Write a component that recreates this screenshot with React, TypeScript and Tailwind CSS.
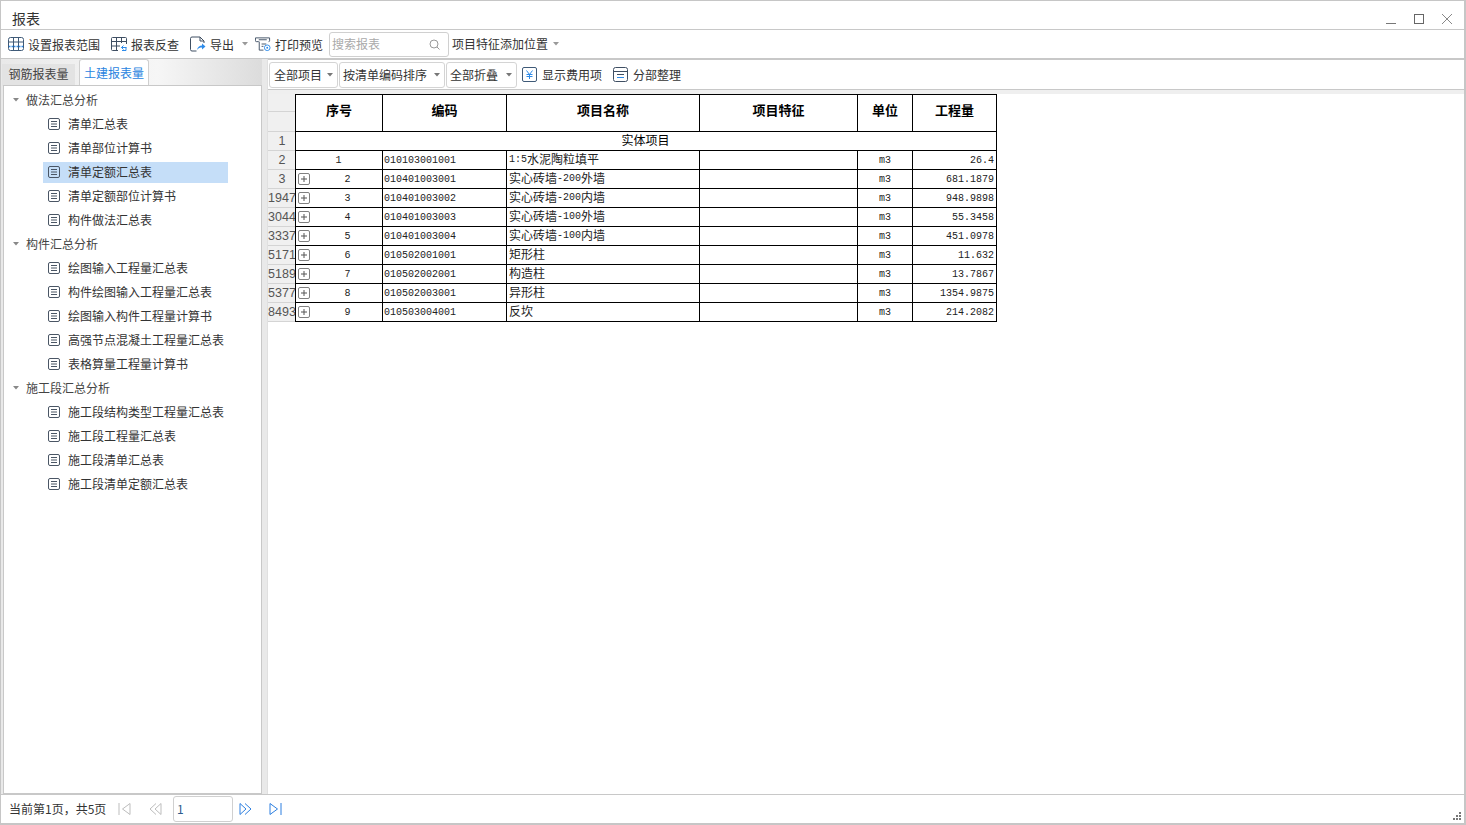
import React from "react";

const cjk = '"Noto Sans CJK SC", "Noto Sans", sans-serif';

function Caret({ c = "#777" }: { c?: string }) {
  return (
    <svg width="6" height="4" viewBox="0 0 6 4" className="shrink-0">
      <path d="M0 0h6L3 3.5z" fill={c} />
    </svg>
  );
}

function TableIcon() {
  return (
    <svg width="16" height="16" viewBox="0 0 16 16" fill="none" className="shrink-0">
      <rect x="0.5" y="1.5" width="15" height="13" rx="2" stroke="#3f5a78" />
      <path d="M5.5 2v12M10.500 2v12M1 6h14" stroke="#3f5a78" />
      <path d="M1 10.500h14" stroke="#2d8bea" strokeWidth="1.5" strokeDasharray="1.5 1" />
    </svg>
  );
}
function ReverseIcon() {
  return (
    <svg width="16" height="16" viewBox="0 0 16 16" fill="none" className="shrink-0">
      <path d="M7 14.500H1.500a1 1 0 0 1-1-1v-11a1 1 0 0 1 1-1h13a1 1 0 0 1 1 1V8" stroke="#3f4f63" />
      <path d="M5.500 2v12M10.500 2v5M1 5.500h14M1 10h8" stroke="#3f4f63" />
      <path d="M15.500 11.500H10.500M12.500 9.500l-2 2 2 2M15 11.500v3h-4" stroke="#2d8bea" />
    </svg>
  );
}
function ExportIcon() {
  return (
    <svg width="16" height="16" viewBox="0 0 16 16" fill="none" className="shrink-0">
      <path d="M6.500 15H2a1.500 1.500 0 0 1-1.500-1.500v-11A1.500 1.500 0 0 1 2 1h8l4 4v2" stroke="#3f4f63" />
      <path d="M10 1v4h4" stroke="#3f4f63" />
      <path d="M7 14c.5-3 2.500-4.500 5-4.500V7.500l3.500 3-3.500 3v-2c-2 0-3.500.5-5 2.500z" fill="#2d8bea" />
    </svg>
  );
}
function PrintIcon() {
  return (
    <svg width="16" height="16" viewBox="0 0 17 16" fill="none" className="shrink-0">
      <path d="M4 5.500H1.500a1 1 0 0 1-1-1v-3h15v3a1 1 0 0 1-1 1" stroke="#3f4f63" />
      <path d="M4 3.500h8.500M4.500 5.500v9h4.500M7 8h5M7 10.500h2" stroke="#3f4f63" />
      <circle cx="13" cy="12" r="3" stroke="#2d8bea" />
      <circle cx="13" cy="12" r="1" fill="#2d8bea" />
    </svg>
  );
}
function DocIcon() {
  return (
    <svg width="12" height="12" viewBox="0 0 12 12" fill="none" className="shrink-0">
      <rect x="0.5" y="0.5" width="11" height="11" rx="1.500" stroke="#4a5665" />
      <path d="M3 3.500h6M3 6h6M3 8.500h6" stroke="#4a5665" />
    </svg>
  );
}
function YenIcon() {
  return (
    <svg width="15" height="15" viewBox="0 0 15 15" fill="none" className="shrink-0">
      <rect x="0.5" y="0.5" width="14" height="14" rx="1.500" stroke="#3f5a78" />
      <path d="M4.500 3.500l3 4 3-4M7.500 7.500v4.500M4.500 7.500h6M4.500 9.500h6" stroke="#2d8bea" />
    </svg>
  );
}
function SectionIcon() {
  return (
    <svg width="15" height="15" viewBox="0 0 15 15" fill="none" className="shrink-0">
      <rect x="0.5" y="0.5" width="14" height="14" rx="2" stroke="#3f4f63" />
      <path d="M1 4.500h13M4 7.500h7" stroke="#3f4f63" />
      <path d="M4 10.500h7" stroke="#2d8bea" />
    </svg>
  );
}
function Search() {
  return (
    <svg width="11" height="11" viewBox="0 0 11 11" fill="none" className="shrink-0">
      <circle cx="5" cy="5" r="4" stroke="#9a9a9a" />
      <path d="M8 8l2.500 2.500" stroke="#9a9a9a" />
    </svg>
  );
}

function ToolBtn({ icon, label, className = "", labelClass = "" }: { icon: React.ReactNode; label: string; className?: string; labelClass?: string }) {
  return (
    <div className={`flex items-center gap-[4px] ${className}`}>
      {icon}
      <span className={`text-xs text-[#333] whitespace-nowrap ${labelClass}`}>{label}</span>
    </div>
  );
}

function Drop({ label, w, pl }: { label: string; w: string; pl: string }) {
  return (
    <div className={`${w} ${pl} h-[26px] flex items-center justify-between pr-[4px] border border-[#d4d4d4] rounded-[3px] bg-white`}>
      <span className="text-xs text-[#333] whitespace-nowrap">{label}</span>
      <Caret />
    </div>
  );
}

const tree = [
  { title: "做法汇总分析", items: ["清单汇总表", "清单部位计算书", "清单定额汇总表", "清单定额部位计算书", "构件做法汇总表"] },
  { title: "构件汇总分析", items: ["绘图输入工程量汇总表", "构件绘图输入工程量汇总表", "绘图输入构件工程量计算书", "高强节点混凝土工程量汇总表", "表格算量工程量计算书"] },
  { title: "施工段汇总分析", items: ["施工段结构类型工程量汇总表", "施工段工程量汇总表", "施工段清单汇总表", "施工段清单定额汇总表"] },
];

const rows = [
  ["2", "1", "010103001001", "1:5水泥陶粒填平", "26.4", false],
  ["3", "2", "010401003001", "实心砖墙-200外墙", "681.1879", true],
  ["1947", "3", "010401003002", "实心砖墙-200内墙", "948.9898", true],
  ["3044", "4", "010401003003", "实心砖墙-100外墙", "55.3458", true],
  ["3337", "5", "010401003004", "实心砖墙-100内墙", "451.0978", true],
  ["5171", "6", "010502001001", "矩形柱", "11.632", true],
  ["5189", "7", "010502002001", "构造柱", "13.7867", true],
  ["5377", "8", "010502003001", "异形柱", "1354.9875", true],
  ["8493", "9", "010503004001", "反坎", "214.2082", true],
] as const;

function Mixed({ text }: { text: string }) {
  const parts = text.split(/([\x20-\x7e]+)/).filter(Boolean);
  return (
    <>
      {parts.map((p, i) =>
        /^[\x20-\x7e]+$/.test(p) ? (
          <span key={i} className="font-['Liberation_Mono'] text-[10px]">{p}</span>
        ) : (
          <span key={i} className="text-xs">{p}</span>
        )
      )}
    </>
  );
}

function Gutter({ label }: { label?: string }) {
  return (
    <div className="w-[27px] shrink-0 h-full bg-[#f0f0f0] border-b border-[#d4d4d4] flex items-center justify-center pt-[1px] pl-[1px] text-[12.5px] text-[#555] font-['Liberation_Sans'] whitespace-nowrap">
      {label}
    </div>
  );
}

function Header() {
  const cols: [string, string][] = [
    ["序号", "w-[87px]"],
    ["编码", "w-[124px]"],
    ["项目名称", "w-[193px]"],
    ["项目特征", "w-[158px]"],
    ["单位", "w-[55px]"],
    ["工程量", "w-[84px]"],
  ];
  return (
    <div className="flex h-[38px]">
      <div className="w-[27px] shrink-0 h-full flex flex-col">
        <div className="h-[18px]"><Gutter /></div>
        <div className="h-[20px]"><Gutter /></div>
      </div>
      <div className="flex border-t border-b border-l border-black">
        {cols.map(([t, w]) => (
          <div key={t} className={`${w} border-r border-black flex items-center justify-center pb-[7px] text-[13px] font-bold text-black`}>
            {t}
          </div>
        ))}
      </div>
    </div>
  );
}

export default function App() {
  return (
    <div
      className="w-[1466px] h-[825px] overflow-hidden flex flex-col bg-white border-t border-l border-[#c6c6c6] border-r-2 border-b-2"
      style={{ fontFamily: cjk }}
    >
      {/* title */}
      <div className="h-[29px] shrink-0 flex items-end justify-between border-b border-[#c8c8c8] pl-[11px] pr-[11px]">
        <span className="text-[14px] text-[#333] leading-[21px]">报表</span>
        <div className="flex items-center gap-[16px] pb-1">
          <svg width="12" height="12" viewBox="0 0 12 12" fill="none"><path d="M1 10.500h10" stroke="#777" /></svg>
          <svg width="12" height="12" viewBox="0 0 12 12" fill="none"><rect x="1.500" y="1.500" width="9" height="9" stroke="#666" /></svg>
          <svg width="12" height="12" viewBox="0 0 12 12" fill="none"><path d="M1 1l10 10M11 1L1 11" stroke="#888" /></svg>
        </div>
      </div>

      {/* main toolbar */}
      <div className="h-[29px] shrink-0 flex items-center pl-[7px] border-b border-[#c8c8c8]">
        <ToolBtn icon={<TableIcon />} label="设置报表范围" labelClass="pt-[2px]" />
        <ToolBtn icon={<ReverseIcon />} label="报表反查" className="ml-[11px]" labelClass="pt-[2px]" />
        <ToolBtn icon={<ExportIcon />} label="导出" className="ml-[11px]" labelClass="pt-[2px]" />
        <div className="ml-2"><Caret c="#999" /></div>
        <ToolBtn icon={<PrintIcon />} label="打印预览" className="ml-[7px]" labelClass="pt-[2px]" />
        <div className="ml-[6px] w-[120px] h-[25px] flex items-center justify-between pl-[2px] pr-2 border border-[#d0d0d0] rounded-[3px]">
          <span className="text-xs text-[#aaa]">搜索报表</span>
          <Search />
        </div>
        <span className="ml-[3px] text-xs text-[#333] whitespace-nowrap">项目特征添加位置</span>
        <div className="ml-[5px]"><Caret c="#999" /></div>
      </div>

      {/* body */}
      <div className="flex-1 flex min-h-0 bg-[#e9e9e9]">
        {/* left */}
        <div className="w-[261px] shrink-0 flex flex-col pl-[1px] bg-[linear-gradient(90deg,#e9e9e9_0%,#f6f6f6_60%,#dcdcdc_100%)]">
          <div className="h-[27px] shrink-0 flex items-end">
            <div className="w-[73px] h-[22px] bg-[#e3e3e3] flex items-center justify-center pb-[2px] text-xs text-[#444]">钢筋报表量</div>
            <div className="ml-[4px] w-[70px] h-[27px] bg-white border border-b-0 border-[#cfcfcf] rounded-t-[3px] flex items-center justify-center text-xs text-[#2a84e0]">土建报表量</div>
          </div>
          <div className="flex-1 bg-white border border-[#c8c8c8] ml-[1px] -mt-[1px] pt-[2px]">
            {tree.map((g) => (
              <div key={g.title}>
                <div className="h-[24px] flex items-center pl-[9px] gap-[7px]">
                  <Caret c="#888" />
                  <span className="text-xs text-[#444]">{g.title}</span>
                </div>
                {g.items.map((it) => {
                  const sel = it === "清单定额汇总表";
                  return (
                    <div key={it} className="h-[24px] flex items-center">
                      <div className={`ml-[39px] w-[185px] h-[21px] flex items-center gap-2 pl-[5px] ${sel ? "bg-[#c5def8]" : ""}`}>
                        <DocIcon />
                        <span className="text-xs text-[#333] whitespace-nowrap">{it}</span>
                      </div>
                    </div>
                  );
                })}
              </div>
            ))}
          </div>
        </div>

        {/* right */}
        <div className="flex-1 min-w-0 flex flex-col ml-[5px] border-l border-[#e0e0e0] bg-white">
          <div className="h-[31px] shrink-0 flex items-center pl-[1px] gap-[1px] border-t border-b border-[#c8c8c8] bg-white">
            <Drop label="全部项目" w="w-[69px]" pl="pl-1" />
            <Drop label="按清单编码排序" w="w-[106px]" pl="pl-[3px]" />
            <Drop label="全部折叠" w="w-[71px]" pl="pl-[3px]" />
            <ToolBtn icon={<YenIcon />} label="显示费用项" className="ml-[4px] gap-[5px]" />
            <ToolBtn icon={<SectionIcon />} label="分部整理" className="ml-[10px] gap-[5px]" />
          </div>
          <div className="h-[4px] shrink-0 bg-[#efefef]" />
          <div className="flex-1 min-h-0 bg-white">
            <Header />
            <div className="flex h-[19px]">
              <Gutter label="1" />
              <div className="w-[702px] border-l border-r border-b border-black flex items-center justify-center pb-[3px] pr-[1px] text-xs text-black">实体项目</div>
            </div>
            {rows.map((r) => (
              <div key={r[0]} className="flex h-[19px]">
                <Gutter label={r[0]} />
                <div className="flex border-l border-b border-black text-[#222]">
                  <div className="w-[87px] border-r border-black flex items-center relative">
                    {r[5] && (
                      <span className="absolute left-[2px] top-[3px] w-[12px] h-[12px] border border-[#808080] rounded-[2px] flex items-center justify-center">
                        <svg width="6" height="6" viewBox="0 0 6 6"><path d="M0 3h6M3 0v6" stroke="#555" /></svg>
                      </span>
                    )}
                    <span className={`w-full text-center font-['Liberation_Mono'] text-[10px] ${r[5] ? "pl-[17px]" : "pr-[1px]"}`}>{r[1]}</span>
                  </div>
                  <div className="w-[124px] border-r border-black flex items-center pl-[1px] font-['Liberation_Mono'] text-[10px]">{r[2]}</div>
                  <div className="w-[193px] border-r border-black flex items-center pl-[2px] pb-[2px] whitespace-nowrap"><Mixed text={r[3]} /></div>
                  <div className="w-[158px] border-r border-black" />
                  <div className="w-[55px] border-r border-black flex items-center justify-center font-['Liberation_Mono'] text-[10px]">m3</div>
                  <div className="w-[84px] border-r border-black flex items-center justify-end pr-[2px] font-['Liberation_Mono'] text-[10px]">{r[4]}</div>
                </div>
              </div>
            ))}
          </div>
        </div>
      </div>

      {/* status */}
      <div className="h-[29px] shrink-0 flex items-center border-t border-[#c8c8c8] bg-white pl-[8px] pr-[2px]">
        <span className="text-xs text-[#333] whitespace-nowrap w-[109px]">当前第1页，共5页</span>
        <svg width="13" height="14" viewBox="0 0 13 14" fill="none" className="shrink-0">
          <path d="M1 1v12M12 1.500L4.500 7l7.500 5.500z" stroke="#bdbdbd" />
        </svg>
        <svg width="13" height="14" viewBox="0 0 13 14" fill="none" className="ml-[18px] shrink-0">
          <path d="M7 1.500L1 7l6 5.500M12 1.500L6 7l6 5.500z" stroke="#bdbdbd" />
        </svg>
        <div className="ml-[11px] w-[60px] h-[26px] border border-[#d0d0d0] rounded-[3px] flex items-center pl-[3px] text-xs text-[#2d5b8c]">1</div>
        <svg width="13" height="14" viewBox="0 0 13 14" fill="none" className="ml-[6px] shrink-0">
          <path d="M1 1.500L7 7l-6 5.500zM6 1.500L12 7l-6 5.500" stroke="#2d7fe0" />
        </svg>
        <svg width="13" height="14" viewBox="0 0 13 14" fill="none" className="ml-[17px] shrink-0">
          <path d="M1 1.500L8.500 7 1 12.500zM12 1v12" stroke="#2d7fe0" />
        </svg>
        <svg width="9" height="9" viewBox="0 0 9 9" fill="#777" className="ml-auto self-end mb-[2px]">
          <rect x="6" y="0" width="2" height="2" />
          <rect x="3" y="3" width="2" height="2" />
          <rect x="6" y="3" width="2" height="2" />
          <rect x="0" y="6" width="2" height="2" />
          <rect x="3" y="6" width="2" height="2" />
          <rect x="6" y="6" width="2" height="2" />
        </svg>
      </div>
    </div>
  );
}
